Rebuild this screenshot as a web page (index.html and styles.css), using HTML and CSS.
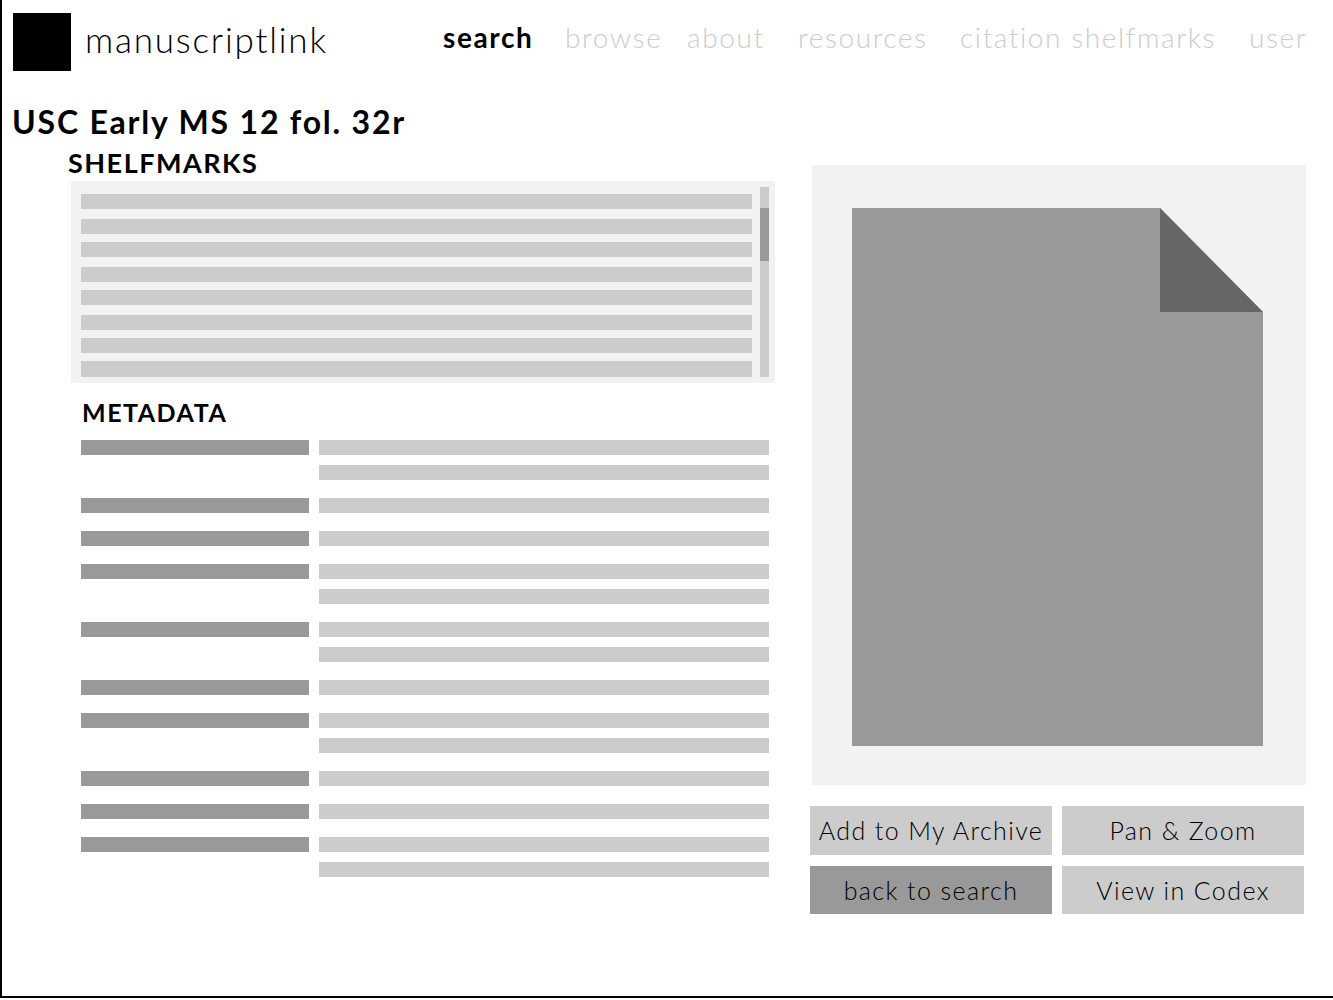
FILE: index.html
```html
<!DOCTYPE html>
<html lang="en">

<head>
    <meta charset="UTF-8">
    <meta name="viewport" content="width=device-width, initial-scale=1.0">
    <title>manuscriptlink</title>
    <link rel="stylesheet" href="styles.css">
</head>

<body>
    <div class="frame">
        <header class="top">
            <div class="logo"></div>
            <div class="brand">manuscriptlink</div>
            <nav class="nav">
                <a class="nav-search">search</a>
                <a class="nav-browse">browse</a>
                <a class="nav-about">about</a>
                <a class="nav-resources">resources</a>
                <a class="nav-citation">citation shelfmarks</a>
                <a class="nav-user">user</a>
            </nav>
        </header>

        <h1 class="title">USC Early MS 12 fol. 32r</h1>

        <div class="content">
            <section class="left">
                <h2 class="shelf-heading">SHELFMARKS</h2>
                <div class="shelf-box">
                    <div class="shelf-list">
                        <div class="bar"></div>
                        <div class="bar"></div>
                        <div class="bar"></div>
                        <div class="bar"></div>
                        <div class="bar"></div>
                        <div class="bar"></div>
                        <div class="bar"></div>
                        <div class="bar"></div>
                    </div>
                    <div class="scrollbar">
                        <div class="thumb"></div>
                    </div>
                </div>

                <h2 class="meta-heading">METADATA</h2>
                <div class="meta">
                    <div class="meta-row"><div class="bar dark"></div><div class="lines"><div class="bar"></div><div class="bar"></div></div></div>
                    <div class="meta-row"><div class="bar dark"></div><div class="lines"><div class="bar"></div></div></div>
                    <div class="meta-row"><div class="bar dark"></div><div class="lines"><div class="bar"></div></div></div>
                    <div class="meta-row"><div class="bar dark"></div><div class="lines"><div class="bar"></div><div class="bar"></div></div></div>
                    <div class="meta-row"><div class="bar dark"></div><div class="lines"><div class="bar"></div><div class="bar"></div></div></div>
                    <div class="meta-row"><div class="bar dark"></div><div class="lines"><div class="bar"></div></div></div>
                    <div class="meta-row"><div class="bar dark"></div><div class="lines"><div class="bar"></div><div class="bar"></div></div></div>
                    <div class="meta-row"><div class="bar dark"></div><div class="lines"><div class="bar"></div></div></div>
                    <div class="meta-row"><div class="bar dark"></div><div class="lines"><div class="bar"></div></div></div>
                    <div class="meta-row"><div class="bar dark"></div><div class="lines"><div class="bar"></div><div class="bar"></div></div></div>
                </div>
            </section>

            <section class="right">
                <div class="viewer">
                    <svg class="page" width="411" height="538" viewBox="0 0 411 538">
                        <polygon points="0,0 308,0 411,104 411,538 0,538" fill="#999999" />
                        <polygon points="308,0 411,104 308,104" fill="#666666" />
                    </svg>
                </div>
                <div class="buttons">
                    <a class="btn">Add to My Archive</a>
                    <a class="btn">Pan &amp; Zoom</a>
                    <a class="btn btn-dark">back to search</a>
                    <a class="btn">View in Codex</a>
                </div>
            </section>
        </div>
    </div>
</body>

</html>
```

FILE: styles.css
```css
body {
    margin: 0;
    background: #fff;
    color: #000;
    font-family: Lato, "Noto Sans", sans-serif;
}

.frame {
    box-sizing: border-box;
    height: 998px;
    border-left: 2px solid #000;
    border-bottom: 2px solid #000;
    overflow: hidden;
}

.top {
    display: flex;
    align-items: flex-start;
    padding: 13px 0 0 11px;
    height: 87px;
    box-sizing: border-box;
}

.logo {
    width: 58px;
    height: 58px;
    background: #000;
    flex: none;
}

.brand {
    margin: 5px 0 0 14px;
    width: 358px;
    font-size: 35px;
    line-height: 42px;
    font-weight: 300;
    letter-spacing: 1.8px;
}

.nav {
    display: flex;
    font-size: 28px;
    line-height: 32px;
    font-weight: 300;
    letter-spacing: 1.6px;
    color: #ccc;
    margin-top: 8px;
    white-space: nowrap;
}

.nav a {
    display: block;
}

.nav .nav-search {
    width: 122px;
    color: #000;
    font-weight: 700;
}

.nav .nav-browse {
    width: 122px;
}

.nav .nav-about {
    width: 111px;
}

.nav .nav-resources {
    width: 162px;
}

.nav .nav-citation {
    width: 289px;
}

.title {
    margin: 14px 0 0 10px;
    font-size: 32px;
    line-height: 42px;
    font-weight: 700;
    letter-spacing: 1.8px;
}

.content {
    display: flex;
}

.left {
    margin-left: 66px;
    flex: none;
    width: 707px;
}

.shelf-heading {
    margin: 4px 0 2px;
    font-size: 27px;
    line-height: 32px;
    font-weight: 700;
    letter-spacing: 1.5px;
}

.shelf-box {
    display: flex;
    width: 704px;
    height: 202px;
    margin-left: 3px;
    background: #f2f2f2;
    box-sizing: border-box;
    padding: 6px 6px 6px 10px;
}

.shelf-list {
    width: 671px;
    padding-top: 7px;
}

.bar {
    height: 14.5px;
    background: #ccc;
}

.bar.dark {
    background: #999;
}

.shelf-list .bar:nth-child(odd) {
    margin-bottom: 10.5px;
}

.shelf-list .bar:nth-child(even) {
    margin-bottom: 8.5px;
}

.shelf-list .bar:nth-child(7) {
    margin-bottom: 8.5px;
}

.shelf-list .bar:last-child {
    height: 16px;
    margin-bottom: 0;
}

.scrollbar {
    width: 9px;
    height: 190px;
    margin-left: 8px;
    padding-top: 21px;
    box-sizing: border-box;
    background: #ccc;
}

.thumb {
    height: 53px;
    background: #999;
}

.meta-heading {
    margin: 13px 0 12px 14px;
    font-size: 25px;
    line-height: 32px;
    font-weight: 700;
    letter-spacing: 1.5px;
}

.meta {
    display: flex;
    flex-direction: column;
    gap: 18.5px;
    margin-left: 13px;
}

.meta-row {
    display: flex;
    gap: 10px;
}

.meta-row > .bar {
    width: 228px;
}

.lines {
    display: flex;
    flex-direction: column;
    gap: 10.5px;
    width: 450px;
}

.right {
    width: 494px;
    margin: 22px 0 0 37px;
    flex: none;
}

.viewer {
    height: 620px;
    box-sizing: border-box;
    padding: 43px 0 0 40px;
    background: #f2f2f2;
}

.page {
    display: block;
}

.buttons {
    display: grid;
    grid-template-columns: 242px 242px;
    grid-auto-rows: 48.5px;
    gap: 11px 10px;
    margin: 21px 0 0 -2px;
}

.btn {
    display: flex;
    align-items: center;
    justify-content: center;
    background: #ccc;
    font-size: 25px;
    font-weight: 300;
    letter-spacing: 1.4px;
    white-space: nowrap;
}

.btn-dark {
    background: #999;
}
```
